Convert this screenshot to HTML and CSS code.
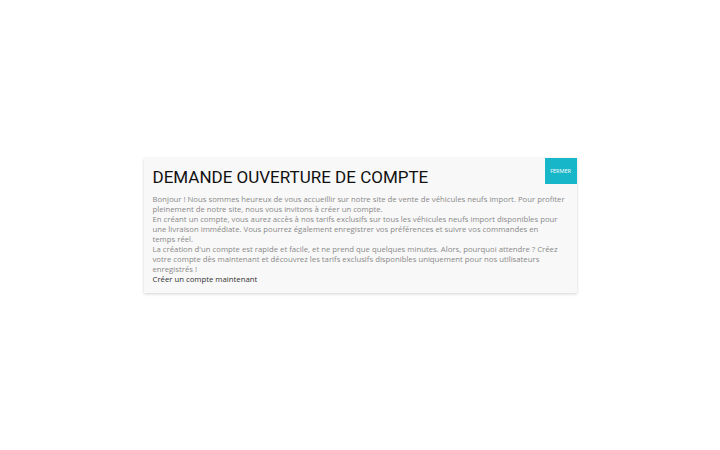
FILE: index.html
```html
<!DOCTYPE html>
<html lang="fr">
<head>
<meta charset="utf-8">
<title>Demande ouverture de compte</title>
<link rel="stylesheet" href="styles.css">
</head>
<body>
<div class="page">
  <div class="modal">
    <button class="close">FERMER</button>
    <h1 class="title">DEMANDE OUVERTURE DE COMPTE</h1>
    <div class="text">
      <p>Bonjour ! Nous sommes heureux de vous accueillir sur notre site de vente de véhicules neufs import. Pour profiter pleinement de notre site, nous vous invitons à créer un compte.</p>
      <p>En créant un compte, vous aurez accès à nos tarifs exclusifs sur tous les véhicules neufs import disponibles pour une livraison immédiate. Vous pourrez également enregistrer vos préférences et suivre vos commandes en<br>temps réel.</p>
      <p>La création d'un compte est rapide et facile, et ne prend que quelques minutes. Alors, pourquoi attendre ? Créez votre compte dès maintenant et découvrez les tarifs exclusifs disponibles uniquement pour nos utilisateurs enregistrés !</p>
      <a class="link" href="#">Créer un compte maintenant</a>
    </div>
  </div>
</div>
</body>
</html>
```

FILE: styles.css
```css
html, body {
  margin: 0;
  padding: 0;
  background: #ffffff;
}
.page {
  min-height: 100vh;
  display: flex;
  align-items: center;
  justify-content: center;
  font-family: "Open Sans", "Noto Sans", sans-serif;
}
.modal {
  position: relative;
  width: 433px;
  box-sizing: border-box;
  padding: 6px 9px 9px 9px;
  background: #f8f8f8;
  box-shadow: 0 1px 3px rgba(0,0,0,0.18);
}
.close {
  position: absolute;
  top: 0;
  right: 0;
  width: 32px;
  height: 26px;
  border: 0;
  padding: 0;
  background: #17b6c9;
  color: #ffffff;
  font-family: "Open Sans", sans-serif;
  font-size: 5.5px;
  cursor: pointer;
}
.title {
  margin: 0 0 4px 0;
  font-family: Roboto, sans-serif;
  font-weight: 400;
  font-size: 17px;
  line-height: 26px;
  color: #111111;
}
.text {
  font-size: 7.75px;
  line-height: 10px;
  color: #8a8a8a;
}
.text p {
  margin: 0;
}
.link {
  color: #333333;
  text-decoration: none;
}
```
